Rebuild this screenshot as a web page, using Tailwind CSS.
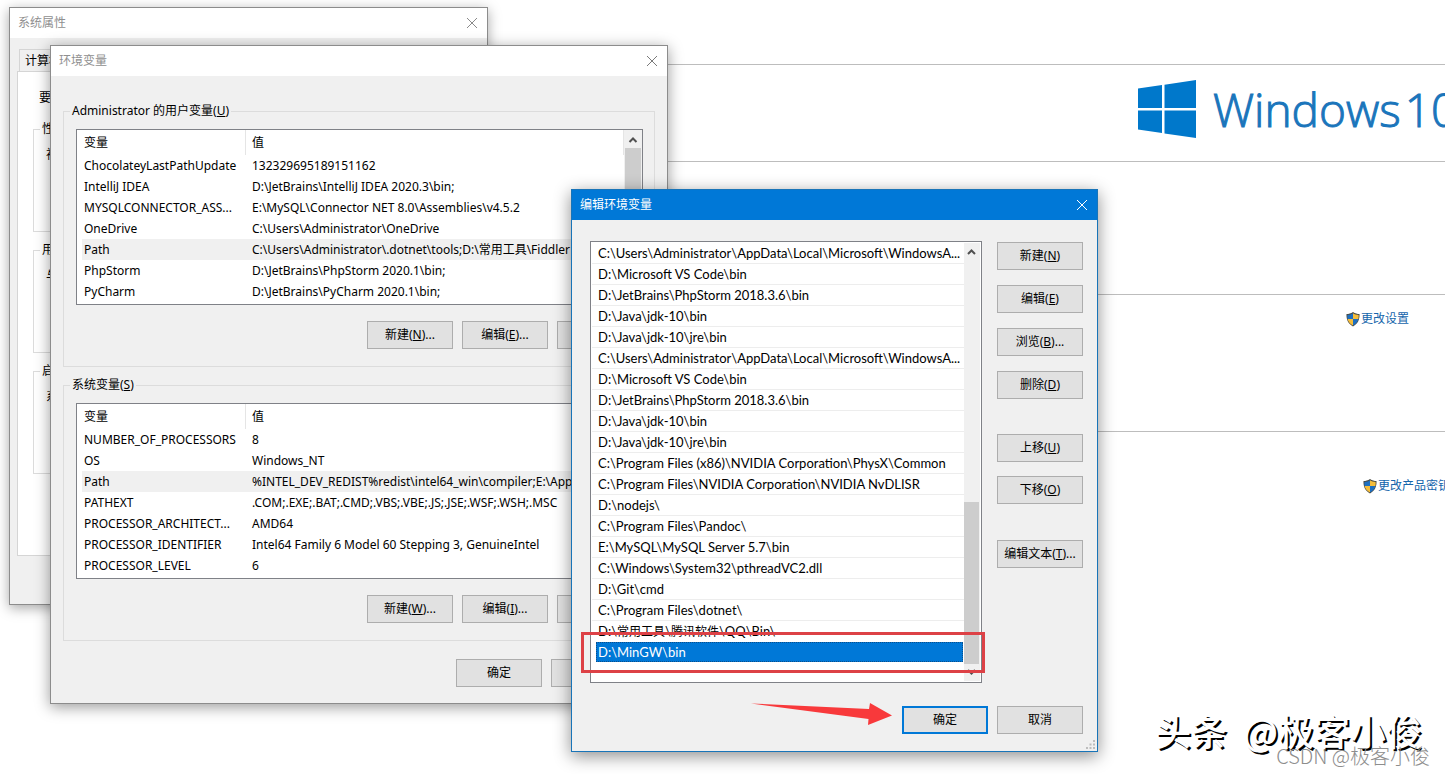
<!DOCTYPE html>
<html lang="zh-CN">
<head>
<meta charset="utf-8">
<title>编辑环境变量</title>
<script src="https://cdn.jsdelivr.net/npm/@tailwindcss/browser@4"></script>
</head>
<body class="relative h-screen overflow-hidden bg-white font-['Noto_Sans','Noto_Sans_CJK_SC',sans-serif] text-xs leading-4 text-black">

<!-- System page behind the dialogs -->
<main class="ml-20 flex flex-col">
  <header class="mt-16 flex h-[98px] justify-end overflow-hidden border-y border-[#bdbdbd]">
    <div class="flex w-[307px] items-center gap-[17px] whitespace-nowrap pb-2">
      <svg class="h-[58px] w-[58px] shrink-0" viewBox="0 0 58 58" fill="#0078cb" aria-hidden="true"><path d="M0 8.500 24 5v23H0zM26.500 4.700 58 0v28H26.500zM0 30.500h24V53L0 49.500zM26.500 30.500H58V58l-31.500-4.500z"/></svg>
      <h1 class="flex gap-1 font-['Open_Sans',sans-serif] text-[46px] font-light leading-none text-[#1a75bb] [-webkit-text-stroke:1px_#1a75bb]"><span>Windows</span><span>10</span></h1>
    </div>
  </header>
  <section class="mt-[132px] flex h-[138px] justify-end border-y border-[#bdbdbd] pt-4">
    <a href="#settings" class="flex h-4 w-[100px] items-center text-[#1565ab]">
      <svg class="h-4 w-4" viewBox="0 0 16 16" aria-hidden="true"><path d="M8 1C6 2.500 3.500 3 1.500 3c-.3 5.500 1.500 9.500 6.500 12.500C13 12.500 14.800 8.500 14.500 3 12.500 3 10 2.500 8 1z" fill="#4a4a42"/><path d="M8 2.300V8H2.600C2.300 6.500 2.300 5 2.400 3.900 4.500 3.800 6.500 3.300 8 2.300zM8 8h5.400c-.6 2.700-2.400 4.900-5.400 6.600z" fill="#1e6fc0"/><path d="M8 2.300V8h5.400c.3-1.500.3-3 .2-4.100C11.500 3.800 9.500 3.300 8 2.300zM8 8H2.600c.6 2.700 2.400 4.900 5.400 6.600z" fill="#f5bd3a"/></svg>更改设置</a>
  </section>
  <section class="flex justify-end overflow-hidden pt-[46px]">
    <a href="#key" class="flex h-4 w-[83px] items-center whitespace-nowrap text-[#1565ab]">
      <svg class="h-4 w-4 shrink-0" viewBox="0 0 16 16" aria-hidden="true"><path d="M8 1C6 2.500 3.500 3 1.500 3c-.3 5.500 1.500 9.500 6.500 12.500C13 12.500 14.800 8.500 14.500 3 12.500 3 10 2.500 8 1z" fill="#4a4a42"/><path d="M8 2.300V8H2.600C2.300 6.500 2.300 5 2.400 3.900 4.500 3.800 6.500 3.300 8 2.300zM8 8h5.400c-.6 2.700-2.400 4.900-5.400 6.600z" fill="#1e6fc0"/><path d="M8 2.300V8h5.400c.3-1.500.3-3 .2-4.100C11.500 3.800 9.500 3.300 8 2.300zM8 8H2.600c.6 2.700 2.400 4.900 5.400 6.600z" fill="#f5bd3a"/></svg>更改产品密钥</a>
  </section>
</main>

<!-- System properties -->
<section aria-label="系统属性" class="absolute left-[9px] top-[7px] w-[479px] border border-[#8c8c8c] bg-[#f0f0f0] pb-12 shadow-[0_3px_12px_rgba(0,0,0,0.35)]">
  <div class="flex h-[30px] items-center justify-between bg-white pl-2 pr-[9px] text-[#8f8f8f]">
    <h2>系统属性</h2>
    <button type="button" aria-label="关闭"><svg class="h-3 w-3" viewBox="0 0 12 12" stroke="#8a8a8a" fill="none"><path d="M1 1l10 10M11 1L1 11"/></svg></button>
  </div>
  <div class="px-[7px] pt-[11px]">
    <button type="button" class="ml-[2px] block h-[22px] border border-b-0 border-[#d5d5d5] px-[5px]">计算机名</button>
    <div class="border border-[#d5d5d5] bg-white px-[15px] pb-[81px] pt-[18px]">
      <p class="pl-[6px]">要进行大多数更改</p>
      <fieldset class="mt-[15px] h-[111px] border border-[#dcdcdc] pl-[12px]"><legend class="-ml-[6px] px-[2px]">性能</legend><p class="mt-[10px]">视觉效果</p></fieldset>
      <fieldset class="mt-[10px] h-[111px] border border-[#dcdcdc] pl-[12px]"><legend class="-ml-[6px] px-[2px]">用户配置文件</legend><p class="mt-[10px]">与登录帐户相关</p></fieldset>
      <fieldset class="mt-[10px] h-[111px] border border-[#dcdcdc] pl-[12px]"><legend class="-ml-[6px] px-[2px]">启动和故障恢复</legend><p class="mt-[10px]">系统启动</p></fieldset>
    </div>
  </div>
</section>

<!-- Environment variables -->
<section aria-label="环境变量" class="absolute left-[50px] top-[45px] w-[618px] border border-[#8c8c8c] bg-[#f0f0f0] pb-4 shadow-[0_3px_14px_rgba(0,0,0,0.4)]">
  <div class="flex h-[30px] items-center justify-between bg-white pl-2 pr-[9px] text-[#8f8f8f]">
    <h2>环境变量</h2>
    <button type="button" aria-label="关闭"><svg class="h-3 w-3" viewBox="0 0 12 12" stroke="#7a7a7a" fill="none"><path d="M1 1l10 10M11 1L1 11"/></svg></button>
  </div>
  <div class="px-3 pt-[27px]">
    <fieldset class="border border-[#dcdcdc] pb-[17px] pl-3 pr-[11px]">
      <legend class="-ml-[6px] px-[2px]">Administrator 的用户变量(<u>U</u>)</legend>
      <div class="mt-[10px] flex h-[176px] border border-[#7f8187] bg-white pl-[5px]">
        <div class="min-w-0 flex-1 overflow-hidden">
          <table class="w-full table-fixed border-separate border-spacing-0 whitespace-nowrap text-left">
            <thead><tr class="h-[25px]"><th class="w-[164px] border-r border-[#e5e5e5] pl-[2px] font-normal">变量</th><th class="border-r border-[#e5e5e5] pl-[6px] font-normal">值</th></tr></thead>
            <tbody>
              <tr class="h-[21px]"><td class="pl-[2px]">ChocolateyLastPathUpdate</td><td class="pl-[6px]">132329695189151162</td></tr>
              <tr class="h-[21px]"><td class="pl-[2px]">IntelliJ IDEA</td><td class="pl-[6px]">D:\JetBrains\IntelliJ IDEA 2020.3\bin;</td></tr>
              <tr class="h-[21px]"><td class="pl-[2px]">MYSQLCONNECTOR_ASS...</td><td class="pl-[6px]">E:\MySQL\Connector NET 8.0\Assemblies\v4.5.2</td></tr>
              <tr class="h-[21px]"><td class="pl-[2px]">OneDrive</td><td class="pl-[6px]">C:\Users\Administrator\OneDrive</td></tr>
              <tr class="h-[21px] bg-[#f0f0f0]"><td class="pl-[2px]">Path</td><td class="pl-[6px]">C:\Users\Administrator\.dotnet\tools;D:\常用工具\Fiddler</td></tr>
              <tr class="h-[21px]"><td class="pl-[2px]">PhpStorm</td><td class="pl-[6px]">D:\JetBrains\PhpStorm 2020.1\bin;</td></tr>
              <tr class="h-[21px]"><td class="pl-[2px]">PyCharm</td><td class="pl-[6px]">D:\JetBrains\PyCharm 2020.1\bin;</td></tr>
            </tbody>
          </table>
        </div>
        <div class="flex w-[18px] flex-col items-center bg-[#f0f0f0]" aria-hidden="true">
          <svg class="h-[18px] w-4" viewBox="0 0 16 18" fill="none" stroke="#505050" stroke-width="2"><path d="M4.500 12L8 8.500l3.500 3.500"/></svg>
          <div class="h-[90px] w-4 bg-[#cdcdcd]"></div>
        </div>
      </div>
      <div class="mt-4 flex justify-end gap-[9px]">
        <button type="button" class="h-7 w-[86px] border border-[#adadad] bg-[#e1e1e1]">新建(<u>N</u>)...</button>
        <button type="button" class="h-7 w-[86px] border border-[#adadad] bg-[#e1e1e1]">编辑(<u>E</u>)...</button>
        <button type="button" class="h-7 w-[86px] border border-[#adadad] bg-[#e1e1e1]">删除(<u>D</u>)</button>
      </div>
    </fieldset>
    <fieldset class="mt-[10px] border border-[#dcdcdc] pb-[17px] pl-3 pr-[11px]">
      <legend class="-ml-[6px] px-[2px]">系统变量(<u>S</u>)</legend>
      <div class="mt-[10px] flex h-[176px] border border-[#7f8187] bg-white pl-[5px]">
        <div class="min-w-0 flex-1 overflow-hidden">
          <table class="w-full table-fixed border-separate border-spacing-0 whitespace-nowrap text-left">
            <thead><tr class="h-[25px]"><th class="w-[164px] border-r border-[#e5e5e5] pl-[2px] font-normal">变量</th><th class="border-r border-[#e5e5e5] pl-[6px] font-normal">值</th></tr></thead>
            <tbody>
              <tr class="h-[21px]"><td class="pl-[2px]">NUMBER_OF_PROCESSORS</td><td class="pl-[6px]">8</td></tr>
              <tr class="h-[21px]"><td class="pl-[2px]">OS</td><td class="pl-[6px]">Windows_NT</td></tr>
              <tr class="h-[21px] bg-[#f0f0f0]"><td class="pl-[2px]">Path</td><td class="pl-[6px]">%INTEL_DEV_REDIST%redist\intel64_win\compiler;E:\App</td></tr>
              <tr class="h-[21px]"><td class="pl-[2px]">PATHEXT</td><td class="pl-[6px]">.COM;.EXE;.BAT;.CMD;.VBS;.VBE;.JS;.JSE;.WSF;.WSH;.MSC</td></tr>
              <tr class="h-[21px]"><td class="pl-[2px]">PROCESSOR_ARCHITECT...</td><td class="pl-[6px]">AMD64</td></tr>
              <tr class="h-[21px]"><td class="pl-[2px]">PROCESSOR_IDENTIFIER</td><td class="pl-[6px]">Intel64 Family 6 Model 60 Stepping 3, GenuineIntel</td></tr>
              <tr class="h-[21px]"><td class="pl-[2px]">PROCESSOR_LEVEL</td><td class="pl-[6px]">6</td></tr>
            </tbody>
          </table>
        </div>
        <div class="w-[18px] bg-[#f0f0f0]" aria-hidden="true"></div>
      </div>
      <div class="mt-4 flex justify-end gap-[9px]">
        <button type="button" class="h-7 w-[86px] border border-[#adadad] bg-[#e1e1e1]">新建(<u>W</u>)...</button>
        <button type="button" class="h-7 w-[86px] border border-[#adadad] bg-[#e1e1e1]">编辑(<u>I</u>)...</button>
        <button type="button" class="h-7 w-[86px] border border-[#adadad] bg-[#e1e1e1]">删除(<u>L</u>)</button>
      </div>
    </fieldset>
    <div class="mt-[18px] flex justify-end gap-[9px] pr-[18px]">
      <button type="button" class="h-7 w-[86px] border border-[#adadad] bg-[#e1e1e1]">确定</button>
      <button type="button" class="h-7 w-[86px] border border-[#adadad] bg-[#e1e1e1]">取消</button>
    </div>
  </div>
</section>

<!-- Edit environment variable -->
<section aria-label="编辑环境变量" class="absolute left-[571px] top-[189px] w-[527px] border border-[#1874b8] bg-[#f0f0f0] pb-[17px] shadow-[0_4px_16px_rgba(0,0,0,0.45)]">
  <div class="flex h-[30px] items-center justify-between bg-[#0078d7] pl-2 pr-[9px] text-white">
    <h2>编辑环境变量</h2>
    <button type="button" aria-label="关闭"><svg class="h-3 w-3" viewBox="0 0 12 12" stroke="#fff" fill="none"><path d="M1 1l10 10M11 1L1 11"/></svg></button>
  </div>
  <div class="flex gap-[15px] pl-[18px] pr-[14px] pt-[21px]">
    <div class="flex h-[442px] min-w-0 flex-1 border border-[#7f8187] bg-white p-px">
      <ul class="min-w-0 flex-1 overflow-hidden whitespace-nowrap font-['Lato','Noto_Sans_CJK_SC',sans-serif] text-[13px]">
        <li class="h-[21px] border-b border-[#ededed] pl-[6px] leading-5">C:\Users\Administrator\AppData\Local\Microsoft\WindowsA...</li>
        <li class="h-[21px] border-b border-[#ededed] pl-[6px] leading-5">D:\Microsoft VS Code\bin</li>
        <li class="h-[21px] border-b border-[#ededed] pl-[6px] leading-5">D:\JetBrains\PhpStorm 2018.3.6\bin</li>
        <li class="h-[21px] border-b border-[#ededed] pl-[6px] leading-5">D:\Java\jdk-10\bin</li>
        <li class="h-[21px] border-b border-[#ededed] pl-[6px] leading-5">D:\Java\jdk-10\jre\bin</li>
        <li class="h-[21px] border-b border-[#ededed] pl-[6px] leading-5">C:\Users\Administrator\AppData\Local\Microsoft\WindowsA...</li>
        <li class="h-[21px] border-b border-[#ededed] pl-[6px] leading-5">D:\Microsoft VS Code\bin</li>
        <li class="h-[21px] border-b border-[#ededed] pl-[6px] leading-5">D:\JetBrains\PhpStorm 2018.3.6\bin</li>
        <li class="h-[21px] border-b border-[#ededed] pl-[6px] leading-5">D:\Java\jdk-10\bin</li>
        <li class="h-[21px] border-b border-[#ededed] pl-[6px] leading-5">D:\Java\jdk-10\jre\bin</li>
        <li class="h-[21px] border-b border-[#ededed] pl-[6px] leading-5">C:\Program Files (x86)\NVIDIA Corporation\PhysX\Common</li>
        <li class="h-[21px] border-b border-[#ededed] pl-[6px] leading-5">C:\Program Files\NVIDIA Corporation\NVIDIA NvDLISR</li>
        <li class="h-[21px] border-b border-[#ededed] pl-[6px] leading-5">D:\nodejs\</li>
        <li class="h-[21px] border-b border-[#ededed] pl-[6px] leading-5">C:\Program Files\Pandoc\</li>
        <li class="h-[21px] border-b border-[#ededed] pl-[6px] leading-5">E:\MySQL\MySQL Server 5.7\bin</li>
        <li class="h-[21px] border-b border-[#ededed] pl-[6px] leading-5">C:\Windows\System32\pthreadVC2.dll</li>
        <li class="h-[21px] border-b border-[#ededed] pl-[6px] leading-5">D:\Git\cmd</li>
        <li class="h-[21px] border-b border-[#ededed] pl-[6px] leading-5">C:\Program Files\dotnet\</li>
        <li class="h-[21px] border-b border-white pl-[6px] leading-5">D:\<span class="text-xs leading-5">常用工具</span>\<span class="text-xs leading-5">腾讯软件</span>\QQ\Bin\</li>
        <li class="ml-1 mr-px h-5 border border-dotted border-[#0a4f8c] bg-[#0078d7] pl-px leading-[18px] text-white">D:\MinGW\bin</li>
      </ul>
      <div class="flex w-4 flex-col bg-[#f0f0f0]" aria-hidden="true">
        <svg class="h-[17px] w-[15px]" viewBox="0 0 15 17" fill="none" stroke="#505050" stroke-width="2"><path d="M4 11l3.500-3.500L11 11"/></svg>
        <div class="mt-auto h-[162px] w-[15px] bg-[#cdcdcd]"></div>
        <svg class="h-[17px] w-[15px]" viewBox="0 0 15 17" fill="none" stroke="#505050" stroke-width="2"><path d="M4 6l3.500 3.500L11 6"/></svg>
      </div>
    </div>
    <div class="flex w-[86px] flex-col pt-px">
      <div class="flex flex-col gap-[15px]">
        <button type="button" class="h-7 border border-[#adadad] bg-[#e1e1e1]">新建(<u>N</u>)</button>
        <button type="button" class="h-7 border border-[#adadad] bg-[#e1e1e1]">编辑(<u>E</u>)</button>
        <button type="button" class="h-7 border border-[#adadad] bg-[#e1e1e1]">浏览(<u>B</u>)...</button>
        <button type="button" class="h-7 border border-[#adadad] bg-[#e1e1e1]">删除(<u>D</u>)</button>
      </div>
      <div class="mt-[35px] flex flex-col gap-[14px]">
        <button type="button" class="h-7 border border-[#adadad] bg-[#e1e1e1]">上移(<u>U</u>)</button>
        <button type="button" class="h-7 border border-[#adadad] bg-[#e1e1e1]">下移(<u>O</u>)</button>
      </div>
      <button type="button" class="mt-9 h-7 whitespace-nowrap border border-[#adadad] bg-[#e1e1e1]">编辑文本(<u>T</u>)...</button>
    </div>
  </div>
  <div class="mt-[23px] flex justify-end gap-[9px] pr-[14px]">
    <button type="button" class="h-7 w-[86px] border-2 border-[#0078d7] bg-[#e1e1e1]">确定</button>
    <button type="button" class="h-7 w-[86px] border border-[#adadad] bg-[#e1e1e1]">取消</button>
  </div>
  <svg class="absolute bottom-[2px] right-[2px] h-[9px] w-[9px]" viewBox="0 0 9 9" fill="#bdbdbd" aria-hidden="true"><path d="M7 0h2v2H7zM7 3.500h2v2H7zM3.500 3.500h2v2h-2zM7 7h2v2H7zM3.500 7h2v2h-2zM0 7h2v2H0z"/></svg>
  <!-- Annotation: highlight frame and arrow -->
  <div class="absolute left-[9px] top-[442px] h-[41px] w-[404px] border-3 border-[#dd4146]"></div>
  <svg class="absolute left-[179px] top-[512px] h-[24px] w-[141px]" viewBox="0 0 141 24" fill="#f8393b" aria-hidden="true"><path d="M0 1.500l118 5.500L119 1l22 12.500L117 23l.500-6z"/></svg>
</section>

<!-- Watermarks -->
<p class="absolute right-[23px] top-[706px] flex gap-4 whitespace-nowrap font-['Noto_Sans_CJK_SC',sans-serif] text-[36px] font-medium leading-[48px] text-white [text-shadow:2px_2px_0_#000]"><span>头条</span><span>@极客小俊</span></p>
<p class="absolute right-[15px] top-[744px] whitespace-nowrap font-['Noto_Sans_CJK_SC',sans-serif] text-[20px] font-light leading-6 text-[#8d8d8d]">CSDN @极客小俊</p>
</body>
</html>
